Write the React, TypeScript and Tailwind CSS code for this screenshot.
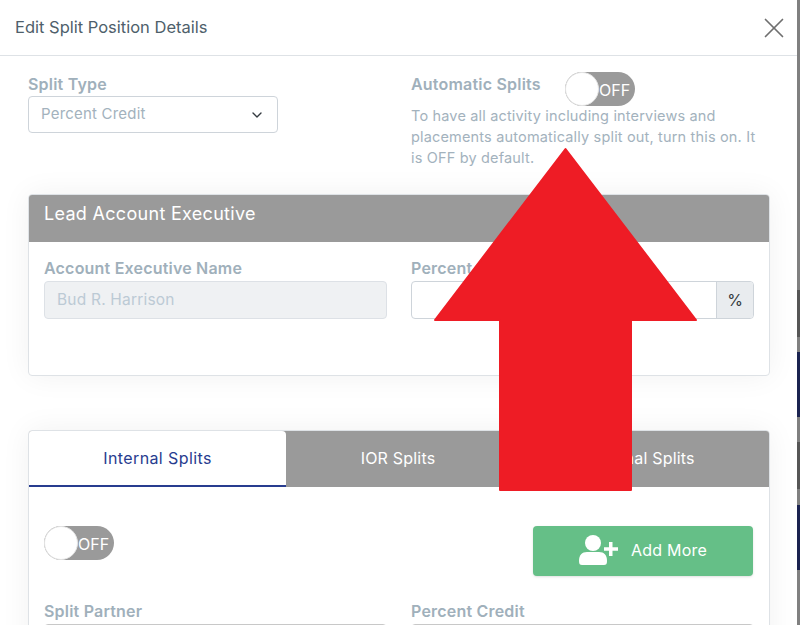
import React from 'react';
import { X, ChevronDown } from 'lucide-react';

function Toggle() {
  return (
    <div className="relative w-[70px] h-[34px] rounded-full bg-[#9a9a9a] shrink-0">
      <div className="absolute left-0 top-0 w-[34px] h-[34px] rounded-full bg-white border border-[#e4e4e4]" />
      <span className="absolute left-[34px] top-[8px] text-[16px] leading-[20px] text-white">OFF</span>
    </div>
  );
}

function Label({ children }: { children: React.ReactNode }) {
  return <div className="text-[16px] leading-[22px] tracking-[0.2px] font-semibold text-[#a0b0bb]">{children}</div>;
}

export default function App() {
  return (
    <div className="relative flex w-[800px] h-[625px] overflow-hidden bg-white text-[#a3b2bd]" style={{ fontFamily: 'Inter, sans-serif' }}>
      <div className="w-[797px] h-[625px] bg-white overflow-hidden">
        {/* Header */}
        <div className="h-[56px] border-b border-[#dee2e6] flex items-center justify-between pl-[15px] pr-[6px]">
          <div className="text-[16.5px] text-[#4f5f6b]">Edit Split Position Details</div>
          <X size={34} strokeWidth={1.2} className="text-[#6f6f6f]" />
        </div>

        <div className="pl-[28px] pr-[27px]">
          {/* Split type + automatic splits */}
          <div className="flex h-[138px] pt-[17px]">
            <div className="w-[383px]">
              <Label>Split Type</Label>
              <div className="mt-[1px] w-[250px] h-[37px] border border-[#ced4da] rounded-[4px] flex items-center justify-between pl-[12px] pr-[12px]">
                <span className="text-[15px] tracking-[0.2px] text-[#a3b2bd]">Percent Credit</span>
                <ChevronDown size={16} strokeWidth={2} className="text-[#343a40]" />
              </div>
            </div>
            <div className="w-[350px]">
              <div className="flex">
                <div className="w-[154px]"><Label>Automatic Splits</Label></div>
                <div className="-mt-[1px]"><Toggle /></div>
              </div>
              <div className="text-[14.5px] leading-[21px] tracking-[0.17px] text-[#a3b2bd] -mt-[1px]">
                To have all activity including interviews and placements automatically split out, turn this on. It is OFF by default.
              </div>
            </div>
          </div>

          {/* Lead account executive */}
          <div className="h-[182px] border border-[#dee2e6] rounded-[4px] overflow-hidden shadow-[0_0_30px_rgba(0,0,0,0.06)]">
            <div className="h-[47px] bg-[#9a9a9a] pl-[15px] pt-[6px] text-[18px] leading-[26px] tracking-[0.3px] text-white">Lead Account Executive</div>
            <div className="flex pl-[15px] pr-[15px] pt-[15px] gap-[24px]">
              <div className="w-[343px]">
                <Label>Account Executive Name</Label>
                <div className="mt-[2px] h-[38px] bg-[#eff1f3] border border-[#dde1e6] rounded-[4px] flex items-center pl-[12px] text-[15.5px] tracking-[0.2px] text-[#bccad5]">Bud R. Harrison</div>
              </div>
              <div className="w-[343px]">
                <Label>Percent Credit</Label>
                <div className="mt-[2px] h-[38px] border border-[#ced4da] rounded-[4px] flex justify-end overflow-hidden">
                  <div className="w-[37px] bg-[#e9ecef] border-l border-[#ced4da] flex items-center justify-center text-[16px] text-[#343a40]">%</div>
                </div>
              </div>
            </div>
          </div>

          {/* Tabs card */}
          <div className="mt-[54px] h-[300px] border border-[#dee2e6] rounded-[4px] overflow-hidden shadow-[0_0_30px_rgba(0,0,0,0.06)]">
            <div className="flex h-[56px] bg-[#9a9a9a] text-[16px] tracking-[0.2px] text-white">
              <div className="w-[257px] pb-[1px] bg-white border-b-2 border-[#283c8f] rounded-tr-[4px] flex items-center justify-center tracking-[0.4px] text-[#283c8f]">Internal Splits</div>
              <div className="w-[224px] pb-[2px] flex items-center justify-center">IOR Splits</div>
              <div className="flex-1 pb-[2px] flex items-center justify-center">External Splits</div>
            </div>
            <div className="flex justify-between pl-[15px] pr-[16px] pt-[39px]">
              <Toggle />
              <div className="w-[220px] h-[50px] pb-[2px] bg-[#65bf87] rounded-[4px] shadow-sm flex items-center justify-center gap-[13px] text-[16px] tracking-[0.2px] text-white">
                <svg className="mt-[2px] -translate-y-[1px]" width="39" height="30" viewBox="0 0 39 30" fill="currentColor">
                  <circle cx="14" cy="8" r="8" />
                  <path d="M0 26c0-6 3-9 8-9h12c5 0 8 3 8 9 0 3-1 4-3 4H3c-2 0-3-1-3-4z" />
                  <path d="M30 7h3.500v5.300H39v3.400h-5.500V21H30v-5.300h-5v-3.400h5z" />
                </svg>
                Add More
              </div>
            </div>
            <div className="flex pl-[15px] pr-[15px] mt-[24px] gap-[24px]">
              <div className="w-[343px]">
                <Label>Split Partner</Label>
                <div className="mt-[2px] h-[38px] border border-[#c8c8c8] rounded-[4px]" />
              </div>
              <div className="w-[343px]">
                <Label>Percent Credit</Label>
                <div className="mt-[2px] h-[38px] border border-[#c8c8c8] rounded-[4px] flex justify-end overflow-hidden">
                  <div className="w-[37px] bg-[#e9ecef]" />
                </div>
              </div>
            </div>
          </div>
        </div>
      </div>

      {/* Page behind the modal, seen along the right edge */}
      <div className="w-[3px] h-[625px] flex flex-col bg-[#808080]">
        <div className="h-[290px]" />
        <div className="h-[47px] bg-[#565656]" />
        <div className="h-[15px]" />
        <div className="h-[65px] bg-[#1b2350]" />
        <div className="h-[25px]" />
        <div className="h-[47px] bg-[#565656]" />
        <div className="h-[16px]" />
        <div className="h-[65px] bg-[#1b2350]" />
      </div>

      {/* Red annotation arrow */}
      <svg className="absolute left-[430px] top-[145px]" width="270" height="350" viewBox="0 0 270 350">
        <path d="M135.500 4 L266 175 L201 175 L201 345 L70 345 L70 175 L5 175 Z" fill="#ee1c25" stroke="#ee1c25" strokeWidth="2" strokeLinejoin="round" />
      </svg>
    </div>
  );
}
